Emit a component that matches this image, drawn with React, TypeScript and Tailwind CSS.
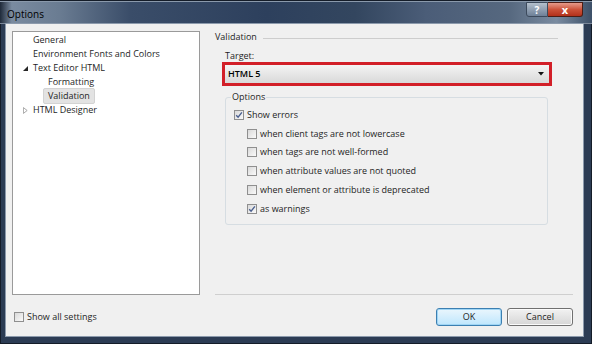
import React from 'react';

const font = "font-['Open_Sans','Noto_Sans',sans-serif]";

function Check({ checked = false }: { checked?: boolean }) {
  return (
    <span className="flex h-[10px] w-[10px] shrink-0 items-center justify-center border border-[#8f8f8f] bg-linear-to-br from-[#d9d9d9] to-[#fafafa]">
      {checked ? (
        <svg viewBox="0 0 8 8" className="h-[8px] w-[8px]">
          <path d="M1.2 4.2 L3.1 6.2 L6.9 1.4" fill="none" stroke="#4a5f8f" strokeWidth="1.4" />
        </svg>
      ) : null}
    </span>
  );
}

function Row({ label, checked, indent }: { label: string; checked?: boolean; indent?: boolean }) {
  return (
    <div className={`flex h-[18.8px] items-center gap-[3px] ${indent ? 'pl-[16px]' : 'pl-[3px]'}`}>
      <Check checked={checked} />
      <span className="leading-[12px]">{label}</span>
    </div>
  );
}

function TreeItem({
  label,
  level = 0,
  arrow,
  selected,
}: {
  label: string;
  level?: number;
  arrow?: 'open' | 'closed';
  selected?: boolean;
}) {
  return (
    <div className={`flex h-[14px] items-center ${level ? 'pl-[35px]' : 'pl-[4px]'}`}>
      {level === 0 ? (
        <span className="flex w-[16px] justify-center">
          {arrow === 'open' ? (
            <svg viewBox="0 0 6 6" className="h-[5px] w-[5px]">
              <path d="M6 0 L6 6 L0 6 Z" fill="#262626" />
            </svg>
          ) : arrow === 'closed' ? (
            <svg viewBox="0 0 6 8" className="h-[7px] w-[5px]">
              <path d="M0.5 0.5 L5 4 L0.5 7.5 Z" fill="none" stroke="#8c8c8c" strokeWidth="0.9" />
            </svg>
          ) : null}
        </span>
      ) : null}
      <span
        className={`leading-[12px] ${
          selected ? '-ml-[5px] rounded-[2px] border border-[#d3d3d3] bg-[#e3e3e3] px-[4px] py-px' : ''
        }`}
      >
        {label}
      </span>
    </div>
  );
}

export default function App() {
  return (
    <div className={`${font} flex h-[344px] w-[592px] flex-col bg-[#2c3c54] text-[9px] text-[#1e1e1e]`}>
      {/* title bar */}
      <div className="flex h-[24px] items-start justify-between bg-[linear-gradient(to_right,#1f2a3a_0%,#7a8ba0_2%,#6a7c92_10%,#3a4d69_22%,#2d405d_45%,#33465f_60%,#4b5d78_72%,#56687f_86%,#7a8ba0_94%,#3d5068_100%)] pr-[9px] shadow-[inset_0_1px_0_#141c28,inset_0_2px_0_#8a99ab,inset_0_-1px_0_#7b8799]">
        <span className="pl-[7px] pt-[8px] text-[10px] leading-[12px] text-black">Options</span>
        <div className="mt-[2px] flex">
          <div className="flex h-[15px] w-[22px] items-center justify-center rounded-bl-[3px] border border-[#3c4a5c] bg-linear-to-b from-[#b4c0cd] to-[#6e8097] text-[10px] font-bold leading-none text-white">
            ?
          </div>
          <div className="flex h-[15px] w-[35px] items-center justify-center rounded-br-[3px] border border-l-0 border-[#4e1d14] bg-linear-to-b from-[#e49a8a] via-[#cc5239] to-[#b3301a] text-[11px] font-bold leading-none text-white">
            x
          </div>
        </div>
      </div>

      {/* frame */}
      <div className="flex flex-1 pb-[8px] pl-[6px] pr-[9px] shadow-[inset_1px_0_0_#141c28,inset_-1px_0_0_#141c28,inset_0_-1px_0_#141c28]">
        <div className="flex flex-1 flex-col bg-[#f0f0f0] pl-[6px] pr-[10px] pt-[7px] shadow-[0_0_0_1px_#8c9aac]">
          <div className="flex h-[264px] gap-[15px]">
            <div className="w-[188px] border border-[#9a9a9a] bg-white pt-px">
              <TreeItem label="General" />
              <TreeItem label="Environment Fonts and Colors" />
              <TreeItem label="Text Editor HTML" arrow="open" />
              <TreeItem label="Formatting" level={1} />
              <TreeItem label="Validation" level={1} selected />
              <TreeItem label="HTML Designer" arrow="closed" />
            </div>

            <div className="flex flex-1 flex-col border-b border-[#cfcfcf]">
              <div className="flex items-center gap-[6px] pr-[15px]">
                <span className="leading-[12px]">Validation</span>
                <span className="mt-[3px] flex-1 border-t border-[#cdcdcd]" />
              </div>
              <div className="ml-[10px] mt-[7px] leading-[12px]">Target:</div>
              <div className="ml-[7px] flex h-[24px] w-[330px] items-center justify-between border-[3px] border-[#d21f28] bg-linear-to-b from-[#f4f4f4] to-[#d9d9d9] pl-[3px] pr-[5px]">
                <span className="font-semibold leading-[12px] text-black">HTML 5</span>
                <svg viewBox="0 0 6 4" className="h-[4px] w-[6px]">
                  <path d="M0 0 L6 0 L3 3.5 Z" fill="#111" />
                </svg>
              </div>
              <fieldset className="ml-[10px] mt-[5px] w-[323px] rounded-[3px] border border-[#d6dde2] pb-[6px] pl-[5px] pt-[2.5px]">
                <legend className="px-px leading-[12px]">Options</legend>
                <Row label="Show errors" checked />
                <Row label="when client tags are not lowercase" indent />
                <Row label="when tags are not well-formed" indent />
                <Row label="when attribute values are not quoted" indent />
                <Row label="when element or attribute is deprecated" indent />
                <Row label="as warnings" checked indent />
              </fieldset>
            </div>
          </div>

          <div className="flex h-[41px] items-center justify-between pt-[2px]">
            <div className="ml-[2px] flex items-center gap-[3px]">
              <Check />
              <span className="leading-[12px]">Show all settings</span>
            </div>
            <div className="flex gap-[5px]">
              <button
                type="button"
                className="h-[18px] w-[66px] rounded-[3px] border border-[#3c7fb1] bg-linear-to-b from-[#eaf6fd] to-[#bee6fd] leading-[12px] shadow-[inset_0_0_0_1px_#9fd5f5]"
              >
                OK
              </button>
              <button
                type="button"
                className="h-[18px] w-[66px] rounded-[3px] border border-[#707070] bg-linear-to-b from-[#f2f2f2] to-[#d6d6d6] leading-[12px] shadow-[inset_0_0_0_1px_#fbfbfb]"
              >
                Cancel
              </button>
            </div>
          </div>
        </div>
      </div>
    </div>
  );
}
